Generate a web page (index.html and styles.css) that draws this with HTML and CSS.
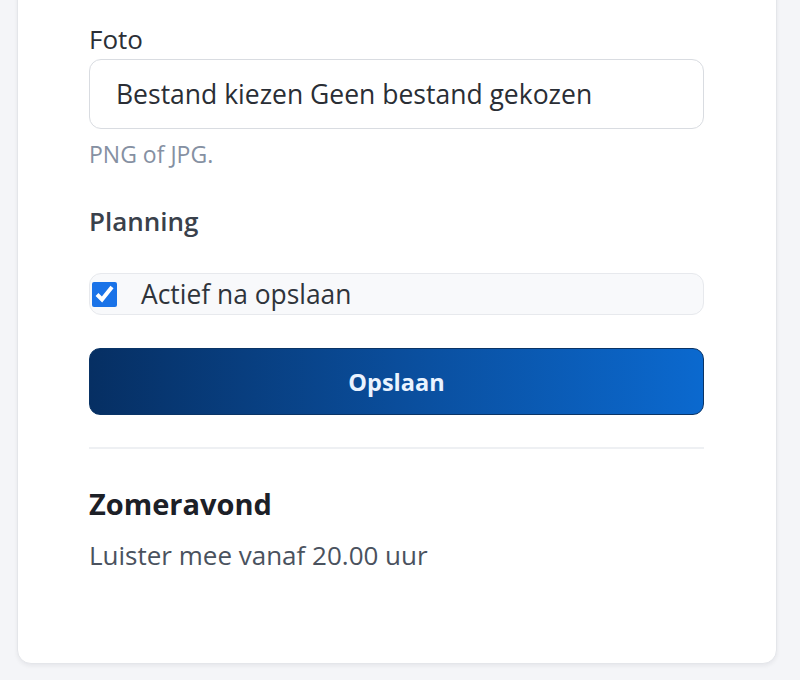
FILE: index.html
```html
<!DOCTYPE html>
<html lang="nl">
<head>
<meta charset="utf-8">
<title>Zomeravond</title>
<link rel="stylesheet" href="styles.css">
</head>
<body>
<div class="page">
  <section class="card">
    <form class="form">
      <label class="label" for="foto">Foto</label>
      <div class="file-input" id="foto">Bestand kiezen Geen bestand gekozen</div>
      <p class="hint">PNG of JPG.</p>
      <h3 class="section-label">Planning</h3>
      <label class="check-row">
        <input type="checkbox" class="check" checked>
        <span>Actief na opslaan</span>
      </label>
      <button type="button" class="btn">Opslaan</button>
    </form>
    <hr class="divider">
    <div class="preview">
      <h2 class="preview-title">Zomeravond</h2>
      <p class="preview-text">Luister mee vanaf 20.00 uur</p>
    </div>
  </section>
</div>
</body>
</html>
```
FILE: styles.css
```css
* { box-sizing: border-box; }
html, body { margin: 0; padding: 0; }
body {
  background: #f4f5f8;
  font-family: "Open Sans", "Noto Sans", "Liberation Sans", sans-serif;
  color: #1f2937;
  height: 680px;
  overflow: hidden;
}
.page {
  padding: 0 23px 0 17px;
}
.card {
  margin-top: -20px;
  background: #ffffff;
  border: 1px solid #e4e6ea;
  border-radius: 14px;
  box-shadow: 0 2px 4px rgba(15, 23, 42, 0.06);
  padding: 42px 72px 92px 71px;
}
.form {
  display: flex;
  flex-direction: column;
}
.label {
  font-size: 26px;
  line-height: 32px;
  font-weight: 500;
  color: #2b2f36;
  margin-bottom: 4px;
}
.file-input {
  height: 70px;
  border: 1.5px solid #d9dce1;
  border-radius: 12px;
  padding: 0 26px;
  display: flex;
  align-items: center;
  font-size: 26.5px;
  color: #2a2e35;
}
.hint {
  margin: 11px 0 0;
  font-size: 23px;
  line-height: 28px;
  color: #8590a2;
}
.section-label {
  margin: 37px 0 0;
  font-size: 26px;
  line-height: 32px;
  font-weight: 600;
  color: #3a414b;
}
.check-row {
  margin-top: 36px;
  height: 42px;
  display: flex;
  align-items: center;
  gap: 24px;
  background: #f8f9fb;
  border: 1px solid #e7e9ed;
  border-radius: 12px;
  font-size: 26.4px;
  color: #2f343b;
}
.check {
  margin: 0 0 0 2px;
  width: 25px;
  height: 25px;
  accent-color: #1a73e8;
}
.btn {
  margin-top: 33px;
  height: 67px;
  border: 1.5px solid #0a3466;
  border-radius: 11px;
  background: linear-gradient(90deg, #062f63 0%, #0a4d9b 50%, #0b69cf 100%);
  color: #eaf3ff;
  font-family: inherit;
  font-size: 23.5px;
  font-weight: 700;
  cursor: pointer;
}
.divider {
  margin: 32px 0 0;
  border: 0;
  border-top: 2px solid #eef0f3;
}
.preview-title {
  margin: 35px 0 0;
  font-size: 29px;
  line-height: 40px;
  font-weight: 700;
  color: #1c2027;
}
.preview-text {
  margin: 15px 0 0;
  font-size: 26px;
  line-height: 32px;
  color: #4a525e;
}
```
